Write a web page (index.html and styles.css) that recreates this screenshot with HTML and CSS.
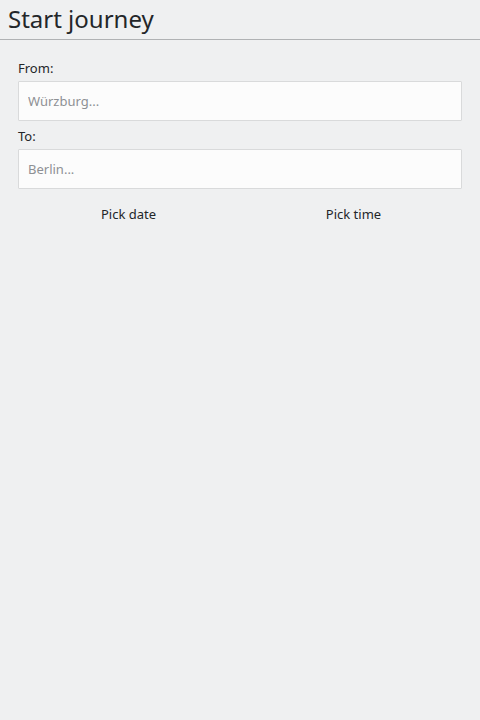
FILE: index.html
```html
<!DOCTYPE html>
<html>
<head>
<meta charset="utf-8">
<link rel="stylesheet" href="styles.css">
</head>
<body>
<header class="header"><h1 class="title">Start journey</h1></header>
<main class="content">
  <label class="label" for="from">From:</label>
  <input class="field" id="from" type="text" placeholder="Würzburg...">
  <label class="label" for="to">To:</label>
  <input class="field" id="to" type="text" placeholder="Berlin...">
  <div class="pickers">
    <button class="pick">Pick date</button>
    <button class="pick">Pick time</button>
  </div>
</main>
</body>
</html>
```
FILE: styles.css
```css
html, body {
  margin: 0;
  padding: 0;
  height: 100%;
  background: #eff0f1;
  font-family: "Noto Sans", "Open Sans", sans-serif;
  color: #232629;
}
.header {
  height: 39px;
  border-bottom: 1px solid #b0b2b4;
  display: flex;
  align-items: center;
  padding: 0 8px;
}
.title {
  margin: 0;
  font-size: 24px;
  font-weight: 400;
  line-height: 1;
  position: relative;
  top: -1px;
}
.content {
  padding: 19px 18px 0 18px;
  display: flex;
  flex-direction: column;
}
.label {
  font-size: 13px;
  line-height: 18px;
  margin-bottom: 4px;
}
.field {
  box-sizing: border-box;
  height: 40px;
  border: 1px solid #d9dadb;
  border-radius: 1px;
  background: #fcfcfc;
  padding: 0 9px;
  font-family: inherit;
  font-size: 13px;
  color: #232629;
  margin: 0 0 6px 0;
  outline: none;
}
.field::placeholder {
  color: #8e9094;
}
.pickers {
  display: grid;
  grid-template-columns: 1fr 1fr;
  margin: 1px -4px 0 -2px;
}
.pick {
  background: none;
  border: none;
  font-family: inherit;
  font-size: 13px;
  color: #232629;
  height: 36px;
  padding: 0;
}
```
